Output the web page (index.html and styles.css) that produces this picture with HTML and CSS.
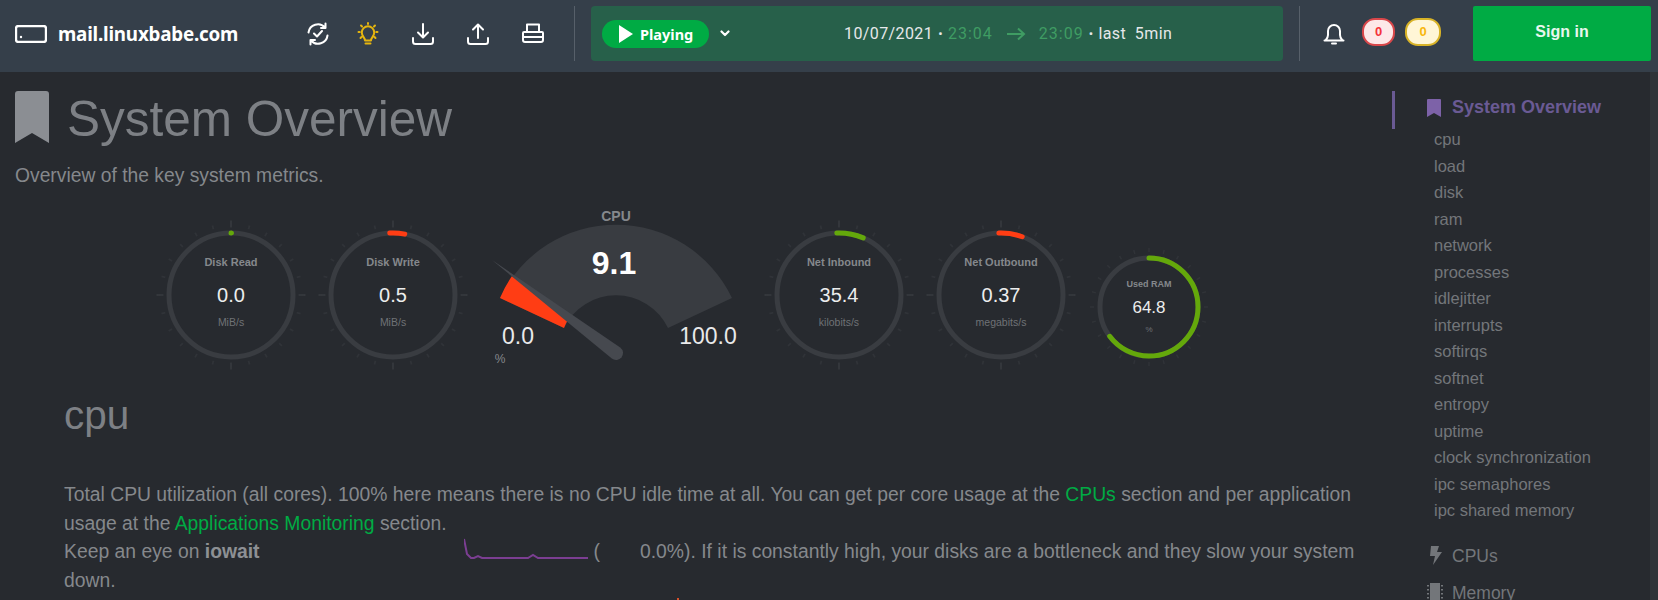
FILE: index.html
```html
<!DOCTYPE html>
<html lang="en">
<head>
<meta charset="utf-8">
<title>mail.linuxbabe.com</title>
<link rel="stylesheet" href="styles.css">
</head>
<body>
<header class="topbar">
  <div class="host">
    <svg class="host-icon" viewBox="0 0 32 18"><rect x="1" y="1" width="30" height="16" rx="2.5" fill="none" stroke="#fff" stroke-width="2.400"/><circle cx="6" cy="12" r="1.200" fill="#fff"/></svg>
    <span class="host-name">mail.linuxbabe.com</span>
  </div>
  <div class="tools">
    <svg class="tool" viewBox="0 0 24 24"><path d="M2.500 10.500A9.500 9.500 0 0 1 19 5.500M21.500 13.500A9.500 9.500 0 0 1 5 18.500M19.500 1.500v4.500h-4.500M4.500 22.500V18h4.500M8 11.500l3 3 5-5.500"/></svg>
    <svg class="tool bulb" viewBox="0 0 24 24"><path d="M9 18.500c0-3-3.200-4-3.200-8a6.200 6.200 0 0 1 12.400 0c0 4-3.200 5-3.200 8zM9.500 21.500h5M12 1v1M2.500 10h1.200M20.300 10h1.200M5 3.500l1 1M19 3.500l-1 1M4.500 16l1-1M19.500 16l-1-1"/></svg>
    <svg class="tool" viewBox="0 0 24 24"><path d="M12 2v13M7 10.500l5 5 5-5M2 16v3.500a2.500 2.500 0 0 0 2.500 2.500h15a2.500 2.500 0 0 0 2.500-2.500V16"/></svg>
    <svg class="tool" viewBox="0 0 24 24"><path d="M12 16V3M7 7.500l5-5 5 5M2 16v3.500a2.500 2.500 0 0 0 2.500 2.500h15a2.500 2.500 0 0 0 2.500-2.500V16"/></svg>
    <svg class="tool" viewBox="0 0 24 24"><path d="M6 10V2.500h12V10M3 10h18a1 1 0 0 1 1 1v7a2 2 0 0 1-2 2H4a2 2 0 0 1-2-2v-7a1 1 0 0 1 1-1zM2 15h20"/></svg>
  </div>
  <div class="rule"></div>
  <div class="player">
    <div class="pill">
      <svg class="play" viewBox="0 0 14 18"><path d="M0 0l14 9-14 9z"/></svg>
      <span>Playing</span>
    </div>
    <svg class="chev" viewBox="0 0 10 7"><path d="M1.500 1.500l3.500 3.500 3.500-3.500"/></svg>
    <div class="range">
      <span>10/07/2021</span><span class="dot">•</span><span class="time">23:04</span>
      <svg class="arrow" viewBox="0 0 20 14"><path d="M1 7h17M12 1.500L18 7l-6 5.500"/></svg>
      <span class="time">23:09</span><span class="dot">•</span><span>last&nbsp; 5min</span>
    </div>
  </div>
  <div class="rule rule-b"></div>
  <svg class="tool bell" viewBox="0 0 24 24"><path d="M3.500 18.500c1.500-1.500 2.500-3 2.500-5.500V9a6 6 0 0 1 12 0v4c0 2.500 1 4 2.500 5.500zM2.500 18.500h19M10 21.500h4"/></svg>
  <span class="badge badge-red">0</span>
  <span class="badge badge-yellow">0</span>
  <a class="signin">Sign in</a>
</header>

<div class="page">
  <main class="content">
    <div class="title-row">
      <svg class="title-icon" viewBox="0 0 34 52"><path d="M3 0h28a3 3 0 0 1 3 3v49L17 42 0 52V3a3 3 0 0 1 3-3z"/></svg>
      <h1>System Overview</h1>
    </div>
    <p class="lead">Overview of the key system metrics.</p>

    <div class="gauges">
      <svg class="dial" viewBox="0 0 160 180">
        <circle class="tick" cx="80" cy="90" r="70" pathLength="240"/>
        <circle class="tick-major" cx="80" cy="90" r="71" pathLength="240"/>
        <circle class="ring" cx="80" cy="90" r="62"/>
        <circle class="arc green" cx="80" cy="90" r="62" pathLength="360" stroke-dasharray="0.5 360" transform="rotate(-90 80 90)"/>
        <text class="d-title" x="80" y="60.500">Disk Read</text>
        <text class="d-value" x="80" y="97">0.0</text>
        <text class="d-unit" x="80" y="121">MiB/s</text>
      </svg>
      <svg class="dial" viewBox="0 0 160 180">
        <circle class="tick" cx="80" cy="90" r="70" pathLength="240"/>
        <circle class="tick-major" cx="80" cy="90" r="71" pathLength="240"/>
        <circle class="ring" cx="80" cy="90" r="62"/>
        <circle class="arc red" cx="80" cy="90" r="62" pathLength="360" stroke-dasharray="14 360" transform="rotate(-93 80 90)"/>
        <text class="d-title" x="80" y="60.500">Disk Write</text>
        <text class="d-value" x="80" y="97">0.5</text>
        <text class="d-unit" x="80" y="121">MiB/s</text>
      </svg>
      <svg class="speed" viewBox="0 0 282 180">
        <path class="sector" d="M25 93A128.500 128.500 0 0 1 257 93L193 123A57.700 57.700 0 0 0 89 123z"/>
        <path class="sector-red" d="M25 93A128.500 128.500 0 0 1 37 71L94 113A57.700 57.700 0 0 0 89 123z"/>
        <path class="needle" d="M17 55L136.800 153.600A7 7 0 1 0 145.200 142.400z"/>
        <text class="s-title" x="141" y="16">CPU</text>
        <text class="s-value" x="139" y="69">9.1</text>
        <text class="s-end" x="43" y="139">0.0</text>
        <text class="s-end" x="233" y="139">100.0</text>
        <text class="s-unit" x="25" y="158">%</text>
      </svg>
      <svg class="dial" viewBox="0 0 160 180">
        <circle class="tick" cx="80" cy="90" r="70" pathLength="240"/>
        <circle class="tick-major" cx="80" cy="90" r="71" pathLength="240"/>
        <circle class="ring" cx="80" cy="90" r="62"/>
        <circle class="arc green" cx="80" cy="90" r="62" pathLength="360" stroke-dasharray="25 360" transform="rotate(-92 80 90)"/>
        <text class="d-title" x="80" y="60.500">Net Inbound</text>
        <text class="d-value" x="80" y="97">35.4</text>
        <text class="d-unit" x="80" y="121">kilobits/s</text>
      </svg>
      <svg class="dial" viewBox="0 0 160 180">
        <circle class="tick" cx="80" cy="90" r="70" pathLength="240"/>
        <circle class="tick-major" cx="80" cy="90" r="71" pathLength="240"/>
        <circle class="ring" cx="80" cy="90" r="62"/>
        <circle class="arc red" cx="80" cy="90" r="62" pathLength="360" stroke-dasharray="22 360" transform="rotate(-92 80 90)"/>
        <text class="d-title" x="80" y="60.500">Net Outbound</text>
        <text class="d-value" x="80" y="97">0.37</text>
        <text class="d-unit" x="80" y="121">megabits/s</text>
      </svg>
      <svg class="ram" viewBox="0 0 130 180">
        <circle class="tick" cx="65" cy="102" r="57" pathLength="240"/>
        <circle class="ring thin" cx="65" cy="102" r="49"/>
        <circle class="arc green thin" cx="65" cy="102" r="49" pathLength="100" stroke-dasharray="64.800 100" transform="rotate(-90 65 102)"/>
        <text class="r-title" x="65" y="82">Used RAM</text>
        <text class="r-value" x="65" y="108">64.8</text>
        <text class="r-unit" x="65" y="127">%</text>
      </svg>
    </div>

    <section class="chart-section">
      <h2>cpu</h2>
      <p>Total CPU utilization (all cores). 100% here means there is no CPU idle time at all. You can get per core usage at the <a>CPUs</a> section and per application usage at the <a>Applications Monitoring</a> section.<br>Keep an eye on <strong>iowait</strong><svg class="spark" viewBox="0 0 124 22"><path d="M0 1L3 16 7 20H10L14 18 18 20H64L69 17 74 20H124"/></svg>(<span class="spark-val">0.0%</span>). If it is constantly high, your disks are a bottleneck and they slow your system down.</p>
      <div class="next-tick"></div>
    </section>
  </main>

  <nav class="side">
    <div class="side-active">
      <svg class="side-mark" viewBox="0 0 14 18"><path d="M1 0h12a1 1 0 0 1 1 1v17l-7-4-7 4V1a1 1 0 0 1 1-1z"/></svg>
      <span>System Overview</span>
    </div>
    <ul class="side-list">
      <li>cpu</li><li>load</li><li>disk</li><li>ram</li><li>network</li><li>processes</li><li>idlejitter</li><li>interrupts</li><li>softirqs</li><li>softnet</li><li>entropy</li><li>uptime</li><li>clock synchronization</li><li>ipc semaphores</li><li>ipc shared memory</li>
    </ul>
    <div class="side-head">
      <svg class="side-ico" viewBox="0 0 16 20"><path d="M4 0h8l-2 6h5L6 19l2-9H3z"/></svg>
      <span>CPUs</span>
    </div>
    <div class="side-head">
      <svg class="side-ico" viewBox="0 0 16 20"><path d="M3 0h10v20H3zM0 2h2v1.500H0zM0 6h2v1.500H0zM0 10h2v1.500H0zM0 14h2v1.500H0zM14 2h2v1.500h-2zM14 6h2v1.500h-2zM14 10h2v1.500h-2zM14 14h2v1.500h-2z"/></svg>
      <span>Memory</span>
    </div>
  </nav>
  <div class="scroll-strip"></div>
</div>
</body>
</html>
```
FILE: styles.css
```css
* { box-sizing: border-box; }
html, body { margin: 0; height: 600px; overflow: hidden; }
body {
  background: #272a2f;
  color: #85888c;
  font-family: "Liberation Sans", Arial, sans-serif;
}

/* top bar */
.topbar {
  display: flex;
  align-items: center;
  height: 72px;
  background: #353f4a;
  padding: 6px 7px 11px 15px;
}
.host { display: flex; align-items: center; width: 291px; }
.host-icon { width: 32px; height: 18px; flex: none; }
.host-name {
  margin-left: 11px;
  color: #fff;
  font: 700 18.800px "Noto Sans", sans-serif;
  letter-spacing: -0.2px;
}
.tools { display: flex; gap: 31px; width: 268px; }
.tools .bulb { margin-left: -5px; }
.tool {
  width: 24px;
  height: 24px;
  flex: none;
  fill: none;
  stroke: #fff;
  stroke-width: 2;
  stroke-linecap: round;
  stroke-linejoin: round;
}
.bulb { stroke: #e5b50f; }
.rule { width: 1px; height: 55px; background: #57606a; flex: none; }
.player {
  display: flex;
  align-items: center;
  width: 692px;
  height: 55px;
  margin-left: 16px;
  padding-left: 11px;
  background: #27604a;
  border-radius: 4px;
  flex: none;
}
.pill {
  display: flex;
  align-items: center;
  width: 107px;
  height: 28px;
  padding-left: 17px;
  border-radius: 14px;
  background: #00ab44;
  color: #fff;
  font: 700 14.500px "Noto Sans", sans-serif;
}
.play { width: 14px; height: 18px; margin-right: 7px; fill: #fff; flex: none; }
.chev {
  width: 10px;
  height: 7px;
  margin-left: 11px;
  fill: none;
  stroke: #fff;
  stroke-width: 2.200;
  stroke-linecap: round;
  stroke-linejoin: round;
}
.range {
  display: flex;
  align-items: center;
  margin-left: 114px;
  color: #e6e8ea;
  font: 400 16px "Roboto", sans-serif;
  letter-spacing: 0.4px;
}
.dot { margin: 0 5px; font-size: 13px; }
.time { color: #3f9c63; letter-spacing: 1px; }
.arrow {
  width: 20px;
  height: 14px;
  margin: 0 13px 0 13px;
  fill: none;
  stroke: #3f9c63;
  stroke-width: 2;
}
.rule-b { margin-left: 16px; }
.bell { margin: 0 16px 0 22px; }
.badge {
  display: flex;
  align-items: center;
  justify-content: center;
  height: 28px;
  margin-top: -4px;
  border-radius: 13px;
  border: 2px solid;
  font: 700 13px "Liberation Sans", sans-serif;
}
.badge-red { width: 33px; background: #fde8e8; border-color: #d9474a; color: #f4333a; }
.badge-yellow { width: 36px; margin-left: 10px; background: #fff6d6; border-color: #d8b327; color: #f8b70c; }
.signin {
  display: flex;
  align-items: center;
  justify-content: center;
  width: 178px;
  height: 55px;
  margin-left: 32px;
  padding-bottom: 4px;
  background: #00ab44;
  border-radius: 2px;
  color: #e9f7ee;
  font: 700 16px "Liberation Sans", sans-serif;
}

/* page */
.page { display: flex; height: 528px; overflow: hidden; }
.content { width: 1392px; flex: none; }
.title-row { display: flex; align-items: flex-start; padding: 19px 0 0 15px; }
.title-icon { width: 34px; height: 52px; fill: #8b8e93; flex: none; }
h1 {
  margin: 2px 0 -2px 18px;
  color: #7d8085;
  font-size: 49.500px;
  font-weight: 400;
  line-height: 52px;
}
.lead { margin: 22px 0 0 15px; font-size: 19.300px; line-height: 22px; }

.gauges { display: flex; align-items: flex-start; gap: 2px; height: 180px; margin: 18px 0 0 151px; }
.dial { width: 160px; height: 180px; flex: none; }
.speed { width: 282px; height: 180px; flex: none; }
.ram { width: 130px; height: 180px; margin-left: 1px; flex: none; }

.tick, .tick-major { fill: none; stroke: #303338; stroke-width: 4; stroke-dasharray: 1 9; stroke-dashoffset: 0.5; }
.tick-major { stroke: #35383d; stroke-width: 7; stroke-dasharray: 1 59; }
.ring, .arc { fill: none; stroke-width: 5; }
.ring { stroke: #393c41; }
.arc { stroke-linecap: round; }
.thin { stroke-width: 5; }
.green { stroke: #64a80b; }
.red { stroke: #ff3d14; }
text { text-anchor: middle; font-family: "Liberation Sans", sans-serif; }
.d-title { fill: #85888c; font-size: 11px; font-weight: 700; }
.d-value { fill: #eceded; font-size: 20px; }
.d-unit { fill: #6f7276; font-size: 10.500px; }
.r-title { fill: #85888c; font-size: 9px; font-weight: 700; }
.r-value { fill: #eceded; font-size: 17px; }
.r-unit { fill: #6f7276; font-size: 8px; }
.sector { fill: #393c41; }
.sector-red { fill: #ff3d14; }
.needle { fill: #46494f; }
.s-title { fill: #85888c; font-size: 14px; font-weight: 700; }
.s-value { fill: #fff; font-size: 32px; font-weight: 700; }
.s-end { fill: #e9e9ea; font-size: 23px; }
.s-unit { fill: #85888c; font-size: 12px; }

.chart-section { padding-left: 64px; margin-top: 8px; }
h2 {
  margin: 0;
  color: #7d8085;
  font-size: 40.500px;
  font-weight: 400;
  line-height: 44px;
}
.chart-section p {
  width: 1310px;
  margin: 44px 0 0;
  font-size: 19.330px;
  line-height: 28.500px;
}
.chart-section a { color: #00ab44; }
.chart-section strong { color: #8d9094; }
.spark {
  width: 124px;
  height: 22px;
  margin: 0 6px 0 204px;
  vertical-align: -2px;
  fill: none;
  stroke: #7b3e92;
  stroke-width: 2;
}
.spark-val { margin-left: 40px; }
.next-tick { width: 2px; height: 6px; margin: 3px 0 0 613px; background: #d7502a; }

/* side nav */
.side { flex: 1; position: relative; padding: 17px 0 0 35px; min-width: 0; }
.side-active {
  display: flex;
  align-items: center;
  height: 37px;
  color: #6a5a94;
  font-size: 18px;
  font-weight: 700;
}
.side-active::before {
  content: "";
  position: absolute;
  left: 0;
  top: 19px;
  width: 3px;
  height: 38px;
  background: #6a5a94;
}
.side-mark { width: 14px; height: 18px; margin-right: 11px; fill: #7d62a8; flex: none; }
.side-list { list-style: none; margin: 0; padding: 0 0 0 7px; font-size: 16.500px; line-height: 26.500px; color: #73767a; }
.side-head { display: flex; align-items: center; height: 37px; margin-top: 14px; color: #73767a; font-size: 17.500px; }
.side-head + .side-head { margin-top: 0; }
.side-ico { width: 16px; height: 20px; margin-right: 9px; fill: #73767a; flex: none; }
.scroll-strip { width: 8px; flex: none; background: #2f3338; }
```
